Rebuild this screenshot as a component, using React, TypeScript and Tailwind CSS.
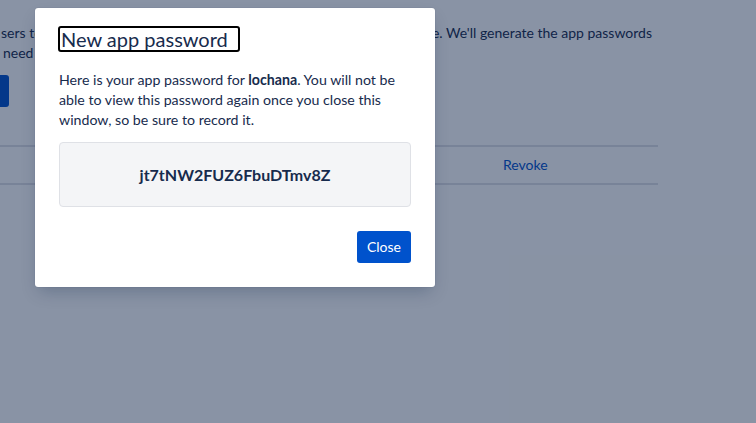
import React from 'react';

const FONT = { fontFamily: 'Lato, "Open Sans", sans-serif' };

function BackgroundPage() {
  return (
    <div className="flex h-[423px] w-[756px] flex-col bg-white text-sm leading-5 text-[#172b4d]">
      {/* intro paragraph, mostly hidden behind the dialog */}
      <div className="mt-[23px] flex w-[652px] justify-between whitespace-nowrap">
        <span className="ml-px">sers to</span>
        <span>use. We&apos;ll generate the app passwords</span>
      </div>
      <div className="ml-[3px] whitespace-nowrap">need</div>

      <button className="mt-3 ml-[-60px] h-8 w-[69px] rounded-[3px] bg-[#0052cc] text-white">
        Create
      </button>

      {/* app passwords table */}
      <div className="mt-[38px] w-[658px] border-y-2 border-[#dfe1e6]">
        <div className="flex h-[36px] items-center">
          <span className="ml-[503px] text-[#0052cc]">Revoke</span>
        </div>
      </div>
    </div>
  );
}

export default function App() {
  return (
    <div className="relative h-[423px] w-[756px] overflow-hidden" style={FONT}>
      <BackgroundPage />

      {/* blanket */}
      <div className="absolute inset-0 bg-[#091e42]/[0.48]" />

      {/* dialog */}
      <div className="absolute top-2 left-[35px] flex w-[400px] flex-col rounded-[3px] bg-white px-6 pt-[18px] pb-6 text-[#172b4d] shadow-[0_8px_16px_-4px_rgba(9,30,66,0.25),0_0_1px_rgba(9,30,66,0.31)]">
        <h1 className="-ml-px box-border h-[26px] w-[182px] rounded-[3px] border-2 border-black pl-px text-xl leading-[22px] font-normal whitespace-nowrap">
          New app password
        </h1>

        <p className="mt-[18px] text-[14.2px] leading-5">
          Here is your app password for <strong className="font-bold">lochana</strong>. You will not be
          able to view this password again once you close this window, so be sure to record it.
        </p>

        <div className="mt-3 flex h-[65px] items-center justify-center rounded-[4px] border border-[#dfe1e6] bg-[#f4f5f7] text-base font-bold">
          jt7tNW2FUZ6FbuDTmv8Z
        </div>

        <div className="mt-6 flex justify-end">
          <button className="h-8 w-[54px] rounded-[3px] bg-[#0052cc] text-sm text-white">Close</button>
        </div>
      </div>
    </div>
  );
}
